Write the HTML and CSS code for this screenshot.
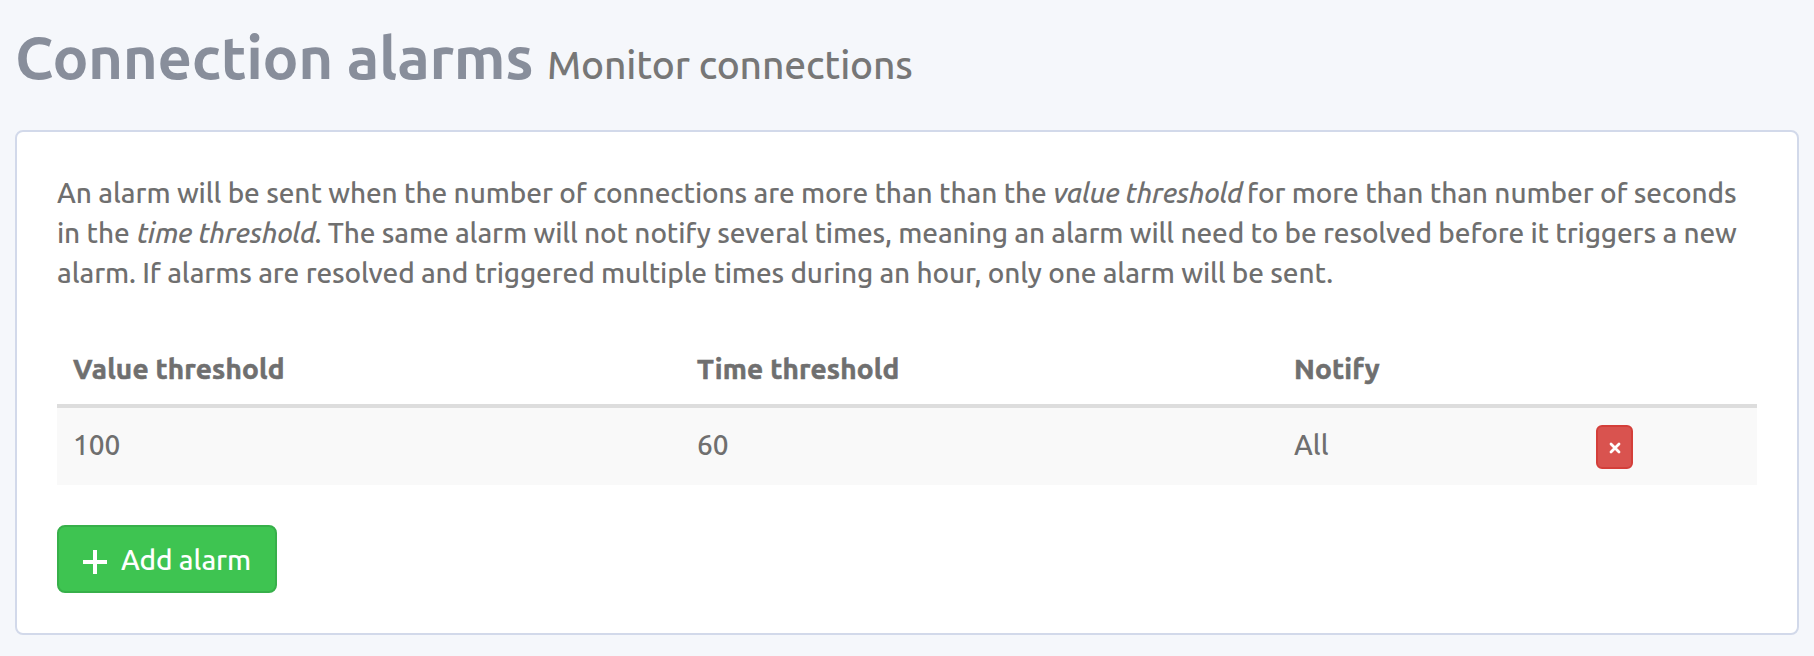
FILE: index.html
```html
<!DOCTYPE html>
<html lang="en">
<head>
<meta charset="utf-8">
<title>Connection alarms</title>
<link rel="stylesheet" href="styles.css">
</head>
<body>
<h1 class="title"><span class="title-main">Connection alarms</span> <small class="subtitle">Monitor connections</small></h1>
<main class="card">
  <p class="intro">
    <span class="line first">An alarm will be sent when the number of connections are more than than the <em>value threshold</em> for more than than number of seconds</span>
    <span class="line second">in the <em>time threshold</em>. The same alarm will not notify several times, meaning an alarm will need to be resolved before it triggers a new</span>
    <span class="line">alarm. If alarms are resolved and triggered multiple times during an hour, only one alarm will be sent.</span>
  </p>
  <table class="table">
    <colgroup><col class="c-value"><col class="c-time"><col class="c-notify"><col></colgroup>
    <thead><tr><th>Value threshold</th><th>Time threshold</th><th>Notify</th><th></th></tr></thead>
    <tbody><tr><td>100</td><td>60</td><td>All</td><td class="action"><button class="remove" aria-label="Remove"><svg width="12" height="12" viewBox="0 0 12 12"><path d="M2 2 10 10M10 2 2 10" stroke="#fff" stroke-width="2.8" stroke-linecap="round"/></svg></button></td></tr></tbody>
  </table>
  <button class="add"><svg class="plus" width="24" height="24" viewBox="0 0 24 24"><path d="M0 12H24M12 0V24" stroke="#fff" stroke-width="4"/></svg><span class="add-label">Add alarm</span></button>
</main>
</body>
</html>
```
FILE: styles.css
```css
* { box-sizing: border-box; }
body {
  margin: 0;
  padding: 0 15px;
  background: #f5f7fb;
  color: #6f6f6f;
  font-family: Ubuntu, "Noto Sans", "Open Sans", sans-serif;
  font-size: 28px;
  font-weight: 500;
  line-height: 40px;
}
.title {
  height: 130px;
  margin: 0;
  padding-top: 17px;
  font-size: 60px;
  font-weight: 500;
  line-height: 80px;
  white-space: nowrap;
}
.title-main { color: #888e9b; font-weight: 700; letter-spacing: -0.4px; }
.subtitle { font-size: 39px; color: #777; letter-spacing: -0.18px; }
.card {
  height: 505px;
  padding: 41px 40px 0;
  background: #fff;
  border: 2px solid #d2d9ea;
  border-radius: 8px;
}
.intro { margin: 0; }
.line { display: block; white-space: nowrap; letter-spacing: -0.12px; }
.first { letter-spacing: -0.096px; }
.line em { letter-spacing: -0.36px; margin-right: -2px; }
.second em { margin-left: 1px; margin-right: -1px; }
.table {
  width: 1700px;
  margin: 40px 0;
  table-layout: fixed;
  border-collapse: separate;
  border-spacing: 0;
}
.c-value { width: 624px; }
.c-time { width: 597px; }
.c-notify { width: 302px; }
th, td { text-align: left; padding: 0 16px; }
th { height: 75px; vertical-align: middle; border-bottom: 4px solid #ddd; font-weight: 700; letter-spacing: 0.18px; -webkit-text-stroke: 0.6px #6f6f6f; }
td { height: 77px; padding-bottom: 4px; background: #f9f9f9; }
.action { padding: 0 16px; line-height: 0; }
button { font: inherit; color: #fff; display: flex; align-items: center; padding: 0; }
.remove { width: 37px; height: 44px; padding-top: 3px; justify-content: center; background: #d9534f; border: 2px solid #d43f3a; border-radius: 6px; }
.add { width: 220px; height: 68px; padding-left: 24px; gap: 14px; background: #3ec451; border: 2px solid #37b04a; border-radius: 8px; }
.plus { position: relative; top: 3px; }
.add-label { padding-top: 2px; letter-spacing: -0.12px; }
```
